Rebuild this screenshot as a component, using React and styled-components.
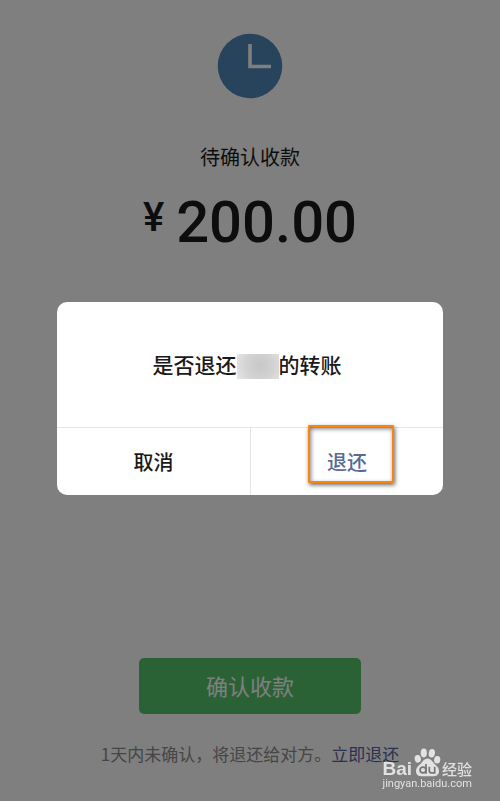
import React from 'react';
import styled, { createGlobalStyle } from 'styled-components';

const GlobalStyle = createGlobalStyle`
  * {
    box-sizing: border-box;
  }
  body {
    margin: 0;
    background: #ffffff;
    font-family: 'Noto Sans CJK SC', sans-serif;
  }
  button {
    padding: 0;
    border: 0;
    font-family: inherit;
    cursor: pointer;
  }
`;

const Page = styled.main`
  display: flex;
  flex-direction: column;
  align-items: center;
  min-height: 100vh;
  padding: 33px 16px 34px;
`;

const ClockIcon = styled.svg`
  display: block;
  width: 66px;
  height: 66px;
`;

const Status = styled.h1`
  margin: 44px 0 0;
  color: #1a1a1a;
  font-size: 20px;
  font-weight: 400;
  line-height: 28px;
`;

const Amount = styled.p`
  display: flex;
  align-items: flex-start;
  gap: 12px;
  margin: 19px 0 0;
  color: #1a1a1a;
  font-family: Roboto, sans-serif;
  font-size: 58px;
  font-weight: 500;
  line-height: 64px;
`;

const Currency = styled.span`
  font-size: 40px;
  line-height: 56px;
`;

const Footer = styled.footer`
  display: flex;
  flex-direction: column;
  align-items: center;
  margin-top: auto;
`;

const ConfirmButton = styled.button`
  width: 222px;
  height: 56px;
  padding-bottom: 2px;
  border-radius: 5px;
  background: #54c46c;
  color: #ffffff;
  font-size: 22px;
`;

const Hint = styled.p`
  margin: 27px 0 0;
  color: #8c8c8c;
  font-size: 17px;
  line-height: 26px;
  white-space: nowrap;

  a {
    color: #5464a0;
    text-decoration: none;
  }
`;

const Mask = styled.div`
  position: fixed;
  inset: 0;
  display: flex;
  align-items: center;
  justify-content: center;
  padding: 0 57px 5px;
  background: rgba(0, 0, 0, 0.5);
`;

const Dialog = styled.section`
  flex: 1;
  border-radius: 10px;
  background: #ffffff;
`;

const Message = styled.h2`
  display: flex;
  align-items: center;
  justify-content: center;
  height: 125px;
  margin: 0;
  padding-right: 6px;
  color: #1a1a1a;
  font-size: 21px;
  font-weight: 500;
`;

const HiddenName = styled.span`
  width: 42px;
  height: 25px;
  margin-top: 4px;
  background: radial-gradient(circle at 55% 45%, #c8c8c8, #d2d2d2 50%, #e6e6e6);
`;

const Actions = styled.div`
  display: grid;
  grid-template-columns: 1fr 1fr;
  height: 68px;
  border-top: 1px solid #e5e5e5;
`;

const Action = styled.button`
  position: relative;
  background: transparent;
  color: ${({ $primary }) => ($primary ? '#576b95' : '#1a1a1a')};
  font-size: 20px;
  font-weight: 500;

  & + & {
    border-left: 1px solid #e5e5e5;
  }
`;

const Highlight = styled.span`
  position: absolute;
  top: -3px;
  left: 57px;
  width: 86px;
  height: 58px;
  border: 2px solid #fb850c;
  border-radius: 1px;
  box-shadow: 1px 2px 4px rgba(0, 0, 0, 0.6), inset 1px 2px 4px rgba(0, 0, 0, 0.5);
`;

const Watermark = styled.div`
  position: fixed;
  right: 28px;
  bottom: 10px;
  display: flex;
  flex-direction: column;
  align-items: center;
  color: #e2e2e2;
`;

const Brand = styled.div`
  display: flex;
  align-items: flex-end;
  height: 30px;
`;

const BrandName = styled.span`
  font-family: 'Liberation Sans', sans-serif;
  font-size: 19px;
  font-weight: 700;
  line-height: 16px;
`;

const Paw = styled.svg`
  width: 27px;
  height: 30px;
  margin-left: 2px;
`;

const BrandTopic = styled.span`
  margin-left: 1px;
  font-size: 15px;
  font-weight: 500;
  line-height: 16px;
`;

const SiteUrl = styled.span`
  font-family: Roboto, sans-serif;
  font-size: 11px;
  line-height: 14px;
`;

export default function App() {
  return (
    <>
      <GlobalStyle />
      <Page>
        <ClockIcon viewBox="0 0 66 66" aria-hidden="true">
          <circle cx="33" cy="33" r="32.3" fill="#5086b8" />
          <path d="M33 11v22.5h21" fill="none" stroke="#ffffff" strokeWidth="3.6" />
        </ClockIcon>
        <Status>待确认收款</Status>
        <Amount>
          <Currency>¥</Currency>
          <span>200.00</span>
        </Amount>
        <Footer>
          <ConfirmButton type="button">确认收款</ConfirmButton>
          <Hint>
            1天内未确认，将退还给对方。<a href="#refund">立即退还</a>
          </Hint>
        </Footer>
      </Page>

      <Mask>
        <Dialog role="dialog" aria-modal="true" aria-labelledby="refund-message">
          <Message id="refund-message">
            是否退还
            <HiddenName />
            的转账
          </Message>
          <Actions>
            <Action type="button">取消</Action>
            <Action type="button" $primary>
              退还
              <Highlight />
            </Action>
          </Actions>
        </Dialog>
      </Mask>

      <Watermark>
        <Brand>
          <BrandName>Bai</BrandName>
          <Paw viewBox="0 0 27 30" aria-hidden="true">
            <g fill="#e2e2e2">
              <ellipse cx="3.8" cy="11.8" rx="3.1" ry="3.9" transform="rotate(-12 3.8 11.8)" />
              <ellipse cx="9.8" cy="6" rx="3.1" ry="4.4" />
              <ellipse cx="17.8" cy="6.2" rx="3.1" ry="4.3" transform="rotate(10 17.8 6.2)" />
              <ellipse cx="23.2" cy="12.8" rx="3.1" ry="3.8" transform="rotate(5 23.2 12.8)" />
              <path d="M13.500 11.500c-3 0-4.500 2.300-6 4.200C5.500 18.200 2 20 2 24c0 3.200 2 5.200 5 5.200h13c3 0 5-2 5-5.200 0-4-3.500-5.800-5.500-8.300-1.500-1.900-3-4.200-6-4.200z" />
            </g>
            <g fill="none" stroke="#777777" strokeWidth="1.7">
              <circle cx="9" cy="23" r="2.9" />
              <path d="M12 17v9.800M15.300 19.700v4c0 1.500.8 2.200 2.200 2.200h3.200v-6.200" />
            </g>
          </Paw>
          <BrandTopic>经验</BrandTopic>
        </Brand>
        <SiteUrl>jingyan.baidu.com</SiteUrl>
      </Watermark>
    </>
  );
}
